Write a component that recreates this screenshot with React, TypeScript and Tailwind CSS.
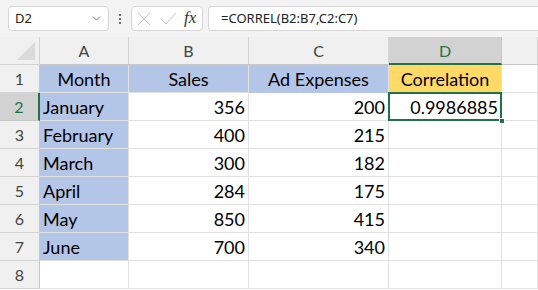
import { ChevronDown } from 'lucide-react'

const cols = [
  { key: 'A', w: 'w-[89px]' },
  { key: 'B', w: 'w-[120px]' },
  { key: 'C', w: 'w-[140px]' },
  { key: 'D', w: 'w-[113px]' },
  { key: 'E', w: 'flex-1' },
]

const rows = [
  { month: 'January', sales: '356', ad: '200' },
  { month: 'February', sales: '400', ad: '215' },
  { month: 'March', sales: '300', ad: '182' },
  { month: 'April', sales: '284', ad: '175' },
  { month: 'May', sales: '850', ad: '415' },
  { month: 'June', sales: '700', ad: '340' },
]

const cell = 'h-[28px] shrink-0 border-r border-b border-[#e1e1e1] flex items-center px-[3px] pt-[2px] overflow-visible whitespace-nowrap'

function RowHead({ n, active }: { n: number; active?: boolean }) {
  return (
    <div
      className={
        'h-[28px] w-[40px] shrink-0 flex items-center justify-center text-[16px] pt-[1px] border-b ' +
        (active
          ? 'bg-[#d2d2d2] text-[#217346] border-b-[#c6c6c6] border-r-2 border-r-[#217346]'
          : 'bg-[#f0f0f0] text-[#444] border-b-[#d4d4d4] border-r border-r-[#c6c6c6]')
      }
    >
      {n}
    </div>
  )
}

export default function App() {
  return (
    <div className="w-[538px] h-[290px] overflow-hidden bg-white text-black font-['Lato','Open_Sans',sans-serif]">
      {/* formula bar */}
      <div className="h-[37px] bg-[#f3f3f3] flex items-center relative">
        <div className="ml-[8px] w-[101px] h-[25px] bg-white border border-[#d6d6d6] rounded-[4px] flex items-center justify-between pl-[6px] pr-[5px] text-[13px] text-[#222] font-['Segoe_UI','Noto_Sans',sans-serif]">
          <span>D2</span>
          <ChevronDown size={13} strokeWidth={1.5} className="text-[#555]" />
        </div>
        <div className="w-[22px] flex flex-col items-center gap-[2px]">
          <span className="w-[2px] h-[2px] bg-[#444] rounded-full" />
          <span className="w-[2px] h-[2px] bg-[#444] rounded-full" />
          <span className="w-[2px] h-[2px] bg-[#444] rounded-full" />
        </div>
        <div className="w-[72px] h-[25px] bg-white border border-[#d6d6d6] rounded-[4px] flex items-center pl-[5px]">
          <svg width="14" height="14" viewBox="0 0 14 14" className="text-[#c4c4c4]">
            <path d="M1 1L13 13M13 1L1 13" stroke="currentColor" strokeWidth="1" fill="none" />
          </svg>
          <svg width="17" height="13" viewBox="0 0 17 13" className="ml-[9px] text-[#c4c4c4]">
            <path d="M1 7L6 12L16 1" stroke="currentColor" strokeWidth="1" fill="none" />
          </svg>
          <span className="font-['Liberation_Serif',serif] italic text-[17px] text-[#333] -mt-[2px] ml-[7px]">fx</span>
        </div>
        <div className="ml-[5px] flex-1 h-[25px] bg-white border border-r-0 border-[#d6d6d6] rounded-l-[4px] flex items-center pl-[12px] text-[13px] text-[#222] font-['Segoe_UI','Noto_Sans',sans-serif]">
          =CORREL(B2:B7,C2:C7)
        </div>
      </div>

      {/* column headers */}
      <div className="flex h-[28px] bg-[#f0f0f0]">
        <div className="w-[40px] shrink-0 h-[28px] border-r border-b border-[#d4d4d4] relative">
          <div className="absolute right-[4px] bottom-[4px] w-0 h-0 border-l-[18px] border-l-transparent border-b-[18px] border-b-[#dadada]" />
        </div>
        {cols.map((c) => (
          <div
            key={c.key}
            className={
              c.w +
              ' shrink-0 h-[28px] flex items-center justify-center text-[16px] pt-[1px] border-r ' +
              (c.key === 'D'
                ? 'bg-[#d2d2d2] text-[#217346] border-r-[#c6c6c6] border-b-2 border-b-[#217346]'
                : 'text-[#444] border-r-[#d4d4d4] border-b border-b-[#c6c6c6]')
            }
          >
            {c.key !== 'E' && c.key}
          </div>
        ))}
      </div>

      {/* row 1 */}
      <div className="flex text-[18px]">
        <RowHead n={1} />
        <div className={cell + ' w-[89px] justify-center bg-[#b4c6e7] border-[#b4c6e7]'}>Month</div>
        <div className={cell + ' w-[120px] justify-center bg-[#b4c6e7] border-[#b4c6e7]'}>Sales</div>
        <div className={cell + ' w-[140px] justify-center bg-[#b4c6e7] border-b-[#b4c6e7]'}>Ad Expenses</div>
        <div className={cell + ' w-[113px] justify-center bg-[#ffd966] border-b-[#ffd966] border-r-[#e1e1e1]'}>Correlation</div>
        <div className={cell + ' flex-1'} />
      </div>

      {rows.map((r, i) => (
        <div key={r.month} className="flex text-[18px]">
          <RowHead n={i + 2} active={i === 0} />
          <div className={cell + ' w-[89px] bg-[#b4c6e7] border-[#b4c6e7]'}>{r.month}</div>
          <div className={cell + ' w-[120px] justify-end'}>{r.sales}</div>
          <div className={cell + ' w-[140px] justify-end'}>{r.ad}</div>
          <div className={cell + ' w-[113px] justify-end relative'}>
            {i === 0 && (
              <>
                <div className="absolute -left-[1px] -top-[1px] w-[114px] h-[29px] border-2 border-[#217346]" />
                <div className="absolute -right-[4px] -bottom-[4px] w-[6px] h-[6px] bg-[#217346] border border-white z-10" />
                <span className="relative">0.9986885</span>
              </>
            )}
          </div>
          <div className={cell + ' flex-1'} />
        </div>
      ))}

      {/* row 8 */}
      <div className="flex text-[18px]">
        <RowHead n={8} />
        <div className={cell + ' w-[89px]'} />
        <div className={cell + ' w-[120px]'} />
        <div className={cell + ' w-[140px]'} />
        <div className={cell + ' w-[113px]'} />
        <div className={cell + ' flex-1'} />
      </div>
    </div>
  )
}
